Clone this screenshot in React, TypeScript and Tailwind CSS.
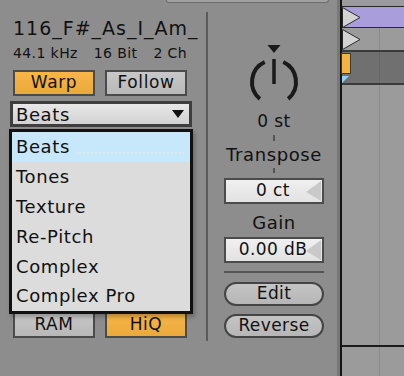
import React from 'react';

const modes = ['Beats', 'Tones', 'Texture', 'Re-Pitch', 'Complex', 'Complex Pro'];

function ToggleButton({ label, on }: { label: string; on?: boolean }) {
    return (
        <div
            className={`h-[26px] w-[82px] border-2 border-[#4b4b4b] flex items-center justify-center text-[17px] tracking-[0.6px] text-[#111] ${
                on ? 'bg-gradient-to-b from-[#f7b647] to-[#eaa93a]' : 'bg-gradient-to-b from-[#c8c8c8] to-[#b8b8b8]'
            }`}
        >
            {label}
        </div>
    );
}

function ValueField({ value }: { value: string }) {
    return (
        <div className="relative w-[100px] h-[26px] border-2 border-[#4b4b4b] bg-gradient-to-b from-[#f0f0f0] to-[#e2e2e2] flex items-center justify-center text-[17px] tracking-[0.4px] text-[#111]">
            <span className="pr-[2px]">{value}</span>
            <svg className="absolute right-[1px] top-[1px]" width="15" height="20" viewBox="0 0 15 20">
                <polygon points="15,0 15,20 0,11" fill="#c9c9c9" />
            </svg>
        </div>
    );
}

function PillButton({ label }: { label: string }) {
    return (
        <div className="w-[100px] h-[24px] rounded-full border-2 border-[#454545] bg-gradient-to-b from-[#c4c4c4] to-[#b6b6b6] flex items-center justify-center text-[17px] tracking-[0.4px] text-[#111]">
            {label}
        </div>
    );
}

function Knob() {
    return (
        <svg width="60" height="64" viewBox="0 0 60 64" className="mt-[43px]">
            <polygon points="23.5,2 36.5,2 30,10" fill="#1a1a1a" />
            <line x1="30" y1="16" x2="30" y2="41" stroke="#1a1a1a" strokeWidth="3.5" />
            <path d="M 39.3 19.06 A 22 22 0 0 1 44.14 55.85" fill="none" stroke="#1a1a1a" strokeWidth="4" />
            <path d="M 15.86 55.85 A 22 22 0 0 1 20.7 19.06" fill="none" stroke="#1a1a1a" strokeWidth="4" />
        </svg>
    );
}

function Timeline() {
    return (
        <div className="relative w-[62px] h-full bg-[#9b9b9b] flex flex-col">
            <div className="h-[6px]" />
            <div className="h-[22px] bg-[#a99ddc] border-y border-[#2a2a2a]" />
            <div className="h-[22px] flex">
                <div className="w-[37px]" />
                <div className="w-px bg-[#8b8b8b]" />
            </div>
            <div className="h-[35px] bg-[#707070] border-y-2 border-[#3a3a3a] flex">
                <div className="w-[37px]" />
                <div className="w-px bg-[#676767]" />
            </div>
            <div className="flex-1 flex flex-col">
                <div className="flex-1 flex">
                    <div className="w-[37px]" />
                    <div className="w-px bg-[#8b8b8b]" />
                </div>
                <div className="h-[2px] bg-[#1c1c1c]" />
                <div className="h-[29px] flex">
                    <div className="w-[37px]" />
                    <div className="w-px bg-[#8b8b8b]" />
                </div>
            </div>

            {/* clip markers over the lanes */}
            <svg className="absolute left-0 top-[7px]" width="19" height="21" viewBox="0 0 19 21">
                <polygon points="0.5,0.5 18,10.5 0.5,20.5" fill="#d3d3d3" stroke="#2a2a2a" strokeWidth="1" />
            </svg>
            <svg className="absolute left-0 top-[29px]" width="19" height="21" viewBox="0 0 19 21">
                <polygon points="0.5,0.5 18,10.5 0.5,20.5" fill="#d3d3d3" stroke="#2a2a2a" strokeWidth="1" />
            </svg>
            <div className="absolute left-[-1px] top-[53px] w-[10px] h-[21px] bg-[#f5b342] border border-[#3a3a3a]" />
            <svg className="absolute left-0 top-[76px]" width="7" height="7" viewBox="0 0 7 7">
                <polygon points="0,0 7,0 0,7" fill="#8fd3f5" />
            </svg>
        </div>
    );
}

export default function App() {
    return (
        <div className="w-[404px] h-[376px] flex bg-[#8d8d8d] text-[#111] font-['DejaVu_Sans','Verdana',sans-serif] overflow-hidden">
            <div className="relative w-[340px] h-full flex flex-col">
                <div className="h-[3px] ml-[166px] w-[163px] bg-[#a0a0a0] border-x border-b border-[#6d6d6d] rounded-b-[4px]" />

                <div className="flex">
                    {/* Sample column */}
                    <div className="pl-[13px] w-[187px] flex flex-col">
                        <div className="mt-[14px] h-[22px] leading-[22px] text-[19px] tracking-[1px] whitespace-nowrap">116_F#_As_I_Am_</div>
                        <div className="mt-[6px] h-[16px] leading-[16px] text-[14px] tracking-[0.4px] flex justify-between">
                            <span>44.1 kHz</span>
                            <span>16 Bit</span>
                            <span>2 Ch</span>
                        </div>
                        <div className="mt-[9px] flex justify-between">
                            <ToggleButton label="Warp" on />
                            <ToggleButton label="Follow" />
                        </div>

                        <div className="relative mt-[5px] ml-[-3px] w-[182px]">
                            <div className="h-[26px] border-[3px] border-[#3e3e3e] bg-gradient-to-b from-[#e8e8e8] to-[#d2d2d2] flex items-center justify-between pl-[3px] pr-[5px]">
                                <span className="text-[18px] tracking-[0.6px]">Beats</span>
                                <svg width="12" height="8" viewBox="0 0 12 8">
                                    <polygon points="0,0 12,0 6,8" fill="#111" />
                                </svg>
                            </div>

                            {/* open mode menu */}
                            <div className="absolute left-[-1px] top-[calc(100%+2px)] w-[184px] border-[3px] border-[#111] bg-[#dcdcdc] shadow-[2px_3px_4px_rgba(0,0,0,0.25)] z-10">
                                {modes.map((m, i) => (
                                    <div
                                        key={m}
                                        className={`h-[29.8px] flex items-center pl-[4px] text-[18px] tracking-[0.6px] ${i === 0 ? 'bg-[#c7e7fb]' : ''}`}
                                    >
                                        <span>{m}</span>
                                        {i === 0 && <span className="flex-1 mx-[6px] mt-[12px] border-b-2 border-dotted border-[#dbe9ee]" />}
                                    </div>
                                ))}
                            </div>
                        </div>

                        <div className="mt-[185px] flex justify-between">
                            <ToggleButton label="RAM" />
                            <ToggleButton label="HiQ" on />
                        </div>
                    </div>

                    {/* divider */}
                    <div className="ml-[19px] mt-[9px] w-[2px] h-[329px] bg-[#5a5a5a]" />

                    {/* Pitch column */}
                    <div className="ml-[16px] w-[100px] flex flex-col items-center">
                        <div className="mt-[-3px]" />
                        <Knob />
                        <div className="mt-[4px] h-[20px] leading-[20px] text-[17px] tracking-[0.4px]">0 st</div>
                        <div className="mt-[4px] w-[2px] h-[6px] bg-[#555]" />
                        <div className="mt-[3px] h-[22px] leading-[22px] text-[18px] tracking-[0.6px]">Transpose</div>
                        <div className="mt-[2px] w-[2px] h-[5px] bg-[#555]" />
                        <div className="mt-[5px]">
                            <ValueField value="0 ct" />
                        </div>
                        <div className="mt-[8px] h-[22px] leading-[22px] text-[18px] tracking-[0.5px]">Gain</div>
                        <div className="mt-[3px]">
                            <ValueField value="0.00 dB" />
                        </div>
                        <div className="mt-[8px] w-[100px] h-[2px] bg-[#555]" />
                        <div className="mt-[9px]">
                            <PillButton label="Edit" />
                        </div>
                        <div className="mt-[8px]">
                            <PillButton label="Reverse" />
                        </div>
                    </div>
                </div>

                <div className="absolute right-0 top-0 w-[3px] h-full bg-[#787878]" />
            </div>
            <div className="w-[2px] h-full bg-[#141414]" />
            <Timeline />
        </div>
    );
}
